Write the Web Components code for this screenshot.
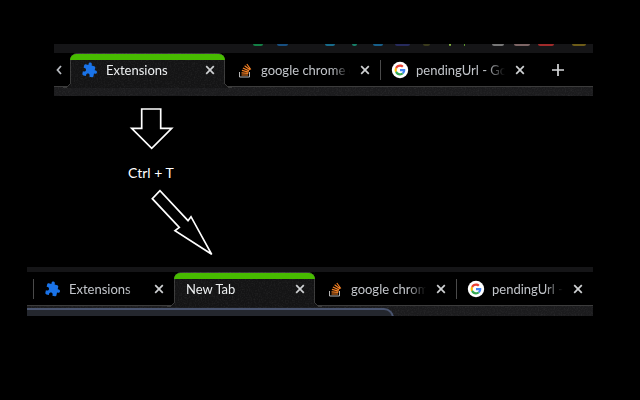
<!DOCTYPE html>
<html>
<head>
<meta charset="utf-8">
<title>New Tab</title>
<style>
  html, body { margin: 0; height: 100%; background: #000; overflow: hidden; }
  body { font-family: "Lato", "Open Sans", "Liberation Sans", sans-serif; color: #fff; }
  tab-strip.first { margin: 44px 47px 0 54px; }
  tab-strip.second { margin: 12px 47px 0 27px; }
</style>
</head>
<body>

<template id="icon-puzzle">
  <svg width="16" height="16" viewBox="0 0 24 24"><path fill="#1a73e8" transform="rotate(12 12 12)" d="M20.5 11H19V7c0-1.1-.9-2-2-2h-4V3.5C13 2.12 11.88 1 10.5 1S8 2.12 8 3.5V5H4c-1.1 0-1.99.9-1.99 2v3.8H3.5c1.49 0 2.7 1.21 2.7 2.7s-1.21 2.7-2.7 2.7H2V20c0 1.1.9 2 2 2h3.8v-1.5c0-1.49 1.21-2.7 2.7-2.7 1.49 0 2.7 1.21 2.7 2.7V22H17c1.1 0 2-.9 2-2v-4h1.5c1.38 0 2.5-1.12 2.5-2.5S21.88 11 20.5 11z"/></svg>
</template>
<template id="icon-stack">
  <svg width="16" height="16" viewBox="0 0 16 16">
    <path fill="none" stroke="#b5b5b5" stroke-width="1" d="M2.500 10v5h10v-5"/>
    <path fill="none" stroke="#f48024" stroke-width="1.200" d="M4.500 13h6.500M4.500 10.800l6.800 .6M4.900 8.400l6.700 1.700M5.900 6l6.200 2.900M7.600 3.800l5.400 4M9.800 2l4 5.500"/>
  </svg>
</template>
<template id="icon-google">
  <svg width="16" height="16" viewBox="0 0 16 16" style="overflow:visible">
    <circle cx="8" cy="8" r="8.200" fill="#fff"/>
    <g transform="translate(2.600 2.600) scale(.225)">
      <path fill="#ea4335" d="M24 9.500c3.500 0 6.700 1.300 9.100 3.400l6.800-6.800C35.800 2.400 30.200 0 24 0 14.600 0 6.500 5.400 2.600 13.200l7.900 6.100C12.400 13.600 17.700 9.500 24 9.500z"/>
      <path fill="#4285f4" d="M47.500 24.500c0-1.600-.1-3.100-.4-4.500H24v9h12.700c-.5 2.900-2.200 5.400-4.700 7.100l7.600 5.900c4.400-4.100 7.900-10.200 7.900-17.500z"/>
      <path fill="#fbbc05" d="M10.500 28.700c-.5-1.400-.8-3-.8-4.700s.3-3.300.8-4.700l-7.900-6.100C.9 16.500 0 20.100 0 24s.9 7.500 2.600 10.800l7.900-6.100z"/>
      <path fill="#34a853" d="M24 48c6.500 0 11.900-2.100 15.600-5.900L32 36.200c-2.100 1.400-4.800 2.300-8 2.300-6.300 0-11.600-4.100-13.500-9.800l-7.900 6.100C6.500 42.600 14.600 48 24 48z"/>
    </g>
  </svg>
</template>

<script>
// dark speckled theme picture used behind the active tab and the toolbar
const NOISE = `<svg class="noise" width="100%" height="100%" aria-hidden="true">
  <filter id="grain" x="0" y="0" width="100%" height="100%">
    <feTurbulence type="fractalNoise" baseFrequency=".7" numOctaves="2" seed="4"/>
    <feColorMatrix values="0 0 0 0 1  0 0 0 0 1  0 0 0 0 1  1.200 0 0 0 -.5"/>
  </filter>
  <rect width="100%" height="100%" filter="url(#grain)" opacity=".1"/>
</svg>`;

class TabItem extends HTMLElement {
  constructor() {
    super();
    this.attachShadow({ mode: 'open' });
    this.shadowRoot.innerHTML = `
    <style>
      :host {
        display: flex;
        align-items: center;
        flex: none;
        position: relative;
        box-sizing: border-box;
        width: var(--tab-width, 155px);
        height: 34px;
        padding: 0 7px 0 12px;
        font-size: 13px;
        color: #c2c5ca;
      }
      :host([active]) {
        color: #eef0f2;
        background: #141415;
        border-radius: 8px 8px 0 0;
        box-shadow: inset 1px 1px #3a3a3a, inset -1px 0 #3a3a3a;
        height: 35px;
        padding-bottom: 1px;
        z-index: 2;
      }
      :host([sep])::before {
        content: ""; position: absolute; left: 0; top: 7px; height: 20px; width: 1px; background: #4a4a4a;
      }
      .noise { position: absolute; inset: 0; pointer-events: none; }
      .green { display: none; position: absolute; left: 0; right: 0; top: 1px; height: 6px; background: #47bb00; border-radius: 7px 7px 0 0; }
      :host([active]) .green { display: block; }
      .foot { display: none; position: absolute; bottom: 0; width: 8px; height: 8px; }
      :host([active]) .foot { display: block; }
      .foot.l { left: -7px; background: radial-gradient(circle at 0 0, transparent 7.5px, #3a3a3a 7.5px, #3a3a3a 8.5px, #141415 8.5px); }
      .foot.r { right: -7px; background: radial-gradient(circle at 100% 0, transparent 7.5px, #3a3a3a 7.5px, #3a3a3a 8.5px, #141415 8.5px); }
      .icon { display: flex; flex: none; margin-right: 8px; position: relative; }
      .icon:empty { display: none; }
      .title {
        flex: 1; min-width: 0; position: relative; white-space: nowrap; overflow: hidden;
        -webkit-mask-image: linear-gradient(to right, #000 calc(100% - 18px), transparent);
        mask-image: linear-gradient(to right, #000 calc(100% - 18px), transparent);
      }
      .close { flex: none; width: 16px; height: 16px; margin-left: 7px; position: relative; }
      .close svg { display: block; }
    </style>
    <span class="green"></span>
    <span class="foot l"></span><span class="foot r"></span>
    <span class="icon"></span>
    <span class="title"><slot></slot></span>
    <span class="close"><svg width="16" height="16" viewBox="0 0 16 16"><path d="M4.200 4.200l7.600 7.600M11.800 4.200l-7.600 7.600" stroke="#cfd1d3" stroke-width="1.700"/></svg></span>`;
  }

  connectedCallback() {
    const name = this.getAttribute('icon');
    if (name) {
      this.shadowRoot.querySelector('.icon').append(document.getElementById('icon-' + name).content.cloneNode(true));
    }
    if (this.hasAttribute('active')) {
      this.shadowRoot.querySelector('.green').insertAdjacentHTML('beforebegin', NOISE);
    }
  }
}

class TabStrip extends HTMLElement {
  constructor() {
    super();
    this.attachShadow({ mode: 'open' });
    this.shadowRoot.innerHTML = `
    <style>
      :host { display: block; position: relative; overflow: hidden; }
      .top { height: var(--top-height, 9px); background: #151517; }
      .row { display: flex; align-items: flex-start; height: 33px; background: #000; position: relative; z-index: 1; }
      .toolbar {
        position: relative; overflow: hidden;
        height: var(--bottom-height, 10px);
        background: #1b1b1d;
        border-top: 1px solid #3c3c3c;
        box-sizing: border-box;
      }
      .noise { position: absolute; inset: 0; }
    </style>
    <div class="top"><slot name="top"></slot></div>
    <div class="row"><slot></slot></div>
    <div class="toolbar">${NOISE}<slot name="bottom"></slot></div>`;
  }
}

class StripGlints extends HTMLElement {
  // the bits of the page that peek above / below a cropped strip
  constructor() {
    super();
    this.attachShadow({ mode: 'open' });
    this.shadowRoot.innerHTML = `
    <style>
      :host { display: block; position: relative; height: 2px; }
      b { position: absolute; top: 0; height: 2px; border-radius: 0 0 2px 2px; }
    </style>`;
  }
  connectedCallback() {
    const list = (this.getAttribute('bits') || '').split(' ').filter(Boolean);
    for (const bit of list) {
      const [x, w, c] = bit.split(',');
      const b = document.createElement('b');
      b.style.cssText = `left:${x}px;width:${w}px;background:${c}`;
      this.shadowRoot.append(b);
    }
  }
}

class NavButton extends HTMLElement {
  constructor() {
    super();
    this.attachShadow({ mode: 'open' });
  }
  connectedCallback() {
    const path = this.getAttribute('kind') === 'plus'
      ? '<path d="M8 2v12M2 8h12" stroke="#d6d8da" stroke-width="1.700" fill="none"/>'
      : '<path d="M7 4L3.500 8L7 12" stroke="#b8bbc0" stroke-width="1.800" fill="none"/>';
    this.shadowRoot.innerHTML = `
    <style>
      :host { display: flex; flex: none; align-items: center; justify-content: center; height: 34px; width: 16px; }
    </style>
    <svg width="16" height="16" viewBox="0 0 16 16">${path}</svg>`;
  }
}

class ArrowMark extends HTMLElement {
  constructor() {
    super();
    this.attachShadow({ mode: 'open' });
  }
  connectedCallback() {
    this.shadowRoot.innerHTML = `
    <style>
      :host { display: block; line-height: 0; }
      svg { display: block; overflow: visible; }
    </style>
    <svg width="${this.getAttribute('w')}" height="${this.getAttribute('h')}">
      <polygon points="${this.getAttribute('points')}" fill="#000" stroke="#fff" stroke-width="1.700"/>
    </svg>`;
  }
}

class ShortcutNote extends HTMLElement {
  constructor() {
    super();
    this.attachShadow({ mode: 'open' });
    this.shadowRoot.innerHTML = `
    <style>
      :host { display: block; font-size: 14px; line-height: 20px; color: #fff; }
    </style>
    <slot></slot>`;
  }
}

class ToolbarPanel extends HTMLElement {
  constructor() {
    super();
    this.attachShadow({ mode: 'open' });
    this.shadowRoot.innerHTML = `
    <style>
      :host {
        display: block; position: absolute; left: 0; top: 2px; width: 367px; height: 20px; box-sizing: border-box;
        background: #24272e; border-top: 2px solid #4a5570; border-right: 2px solid #4a5570;
        border-radius: 0 10px 0 0;
      }
    </style>`;
  }
}

customElements.define('tab-item', TabItem);
customElements.define('tab-strip', TabStrip);
customElements.define('strip-glints', StripGlints);
customElements.define('nav-button', NavButton);
customElements.define('arrow-mark', ArrowMark);
customElements.define('shortcut-note', ShortcutNote);
customElements.define('toolbar-panel', ToolbarPanel);
</script>

<tab-strip class="first">
  <strip-glints slot="top" bits="199,10,#137f45 223,11,#174f80 271,10,#176a8a 298,5,#17806a 319,10,#175f8a 341,15,#262a5c 369,7,#3a3a1c 395,2,#86b540 410,1,#5f9a30 438,12,#777 460,16,#7d6565 484,16,#a02a2a 518,14,#6d5c18"></strip-glints>
  <nav-button kind="back"></nav-button>
  <tab-item active icon="puzzle">Extensions</tab-item>
  <tab-item icon="stack">google chrome e</tab-item>
  <tab-item sep icon="google">pendingUrl - Goo</tab-item>
  <nav-button kind="plus" style="margin-left:15px"></nav-button>
</tab-strip>

<arrow-mark w="82" h="41" points="10.700,1 29.700,1 29.700,20.300 40.700,20.300 20.700,40.300 .7,20.300 10.700,20.300" style="margin:12px 0 0 131px"></arrow-mark>

<shortcut-note style="margin:14px 0 0 128px">Ctrl + T</shortcut-note>

<arrow-mark w="82" h="65" points="29,.7 21.300,8.700 48.300,37.300 44,40.700 80.700,64.300 60,26.700 57,30.700" style="margin:7px 0 0 131px"></arrow-mark>

<tab-strip class="second" style="--top-height:5px;--bottom-height:11px;--tab-width:141px">
  <tab-item sep icon="puzzle" style="margin-left:6px">Extensions</tab-item>
  <tab-item active>New Tab</tab-item>
  <tab-item icon="stack">google chrome</tab-item>
  <tab-item sep icon="google" style="--tab-width:137px">pendingUrl - G</tab-item>
  <toolbar-panel slot="bottom"></toolbar-panel>
</tab-strip>

</body>
</html>
